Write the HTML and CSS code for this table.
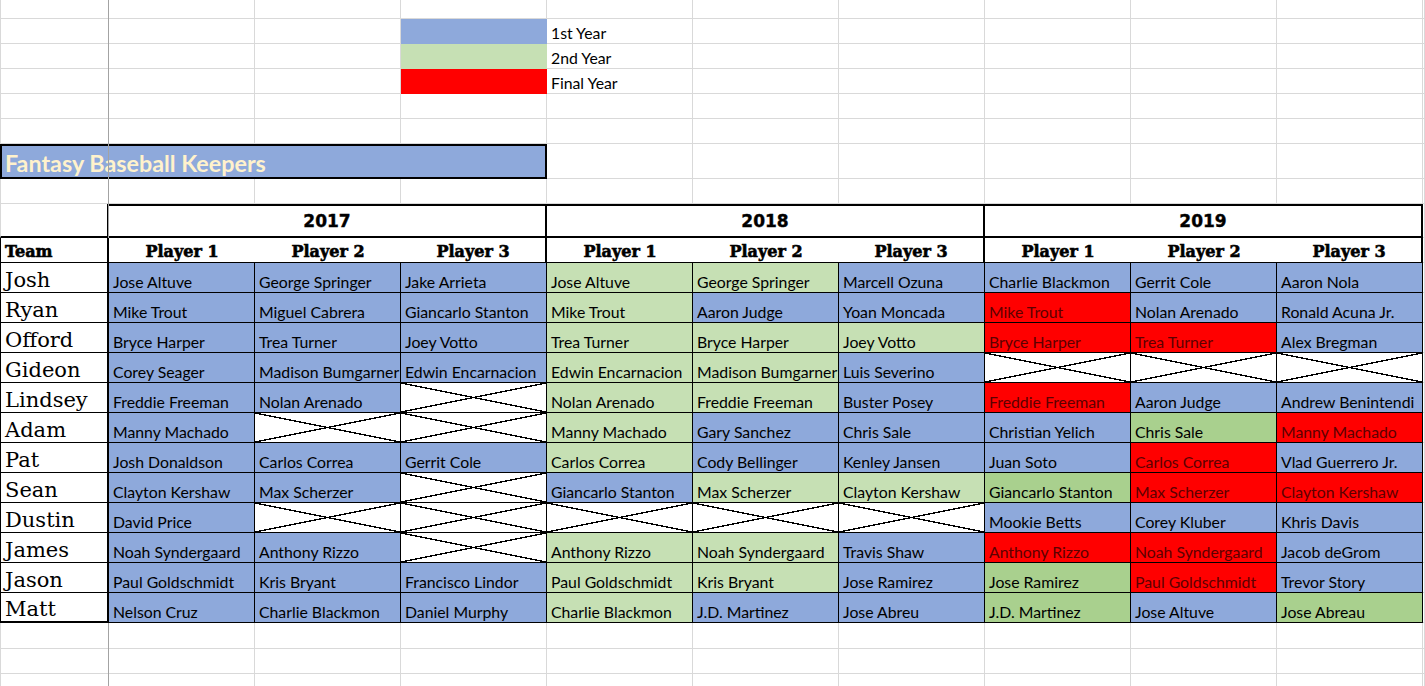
FILE: index.html
```html
<!DOCTYPE html>
<html lang="en">
<head>
<meta charset="utf-8">
<title>Fantasy Baseball Keepers</title>
<link rel="stylesheet" href="styles.css">
</head>
<body>
<div class="sheet">
  <!-- row 1 -->
  <div class="e a"></div><div class="e"></div><div class="e"></div><div class="e"></div><div class="e"></div><div class="e"></div><div class="e"></div><div class="e"></div><div class="e"></div><div class="e"></div><div class="e"></div>
  <!-- legend rows -->
  <div class="e a"></div><div class="e"></div><div class="e"></div><div class="sw b"></div><div class="e lt">1st Year</div><div class="e"></div><div class="e"></div><div class="e"></div><div class="e"></div><div class="e"></div><div class="e"></div>
  <div class="e a"></div><div class="e"></div><div class="e"></div><div class="sw g"></div><div class="e lt">2nd Year</div><div class="e"></div><div class="e"></div><div class="e"></div><div class="e"></div><div class="e"></div><div class="e"></div>
  <div class="e a"></div><div class="e"></div><div class="e"></div><div class="sw r"></div><div class="e lt">Final Year</div><div class="e"></div><div class="e"></div><div class="e"></div><div class="e"></div><div class="e"></div><div class="e"></div>
  <!-- empty rows -->
  <div class="e a"></div><div class="e"></div><div class="e"></div><div class="e"></div><div class="e"></div><div class="e"></div><div class="e"></div><div class="e"></div><div class="e"></div><div class="e"></div><div class="e"></div>
  <div class="e a"></div><div class="e"></div><div class="e"></div><div class="e"></div><div class="e"></div><div class="e"></div><div class="e"></div><div class="e"></div><div class="e"></div><div class="e"></div><div class="e"></div>
  <!-- title -->
  <div class="title">Fantasy Baseball Keepers</div><div class="e"></div><div class="e"></div><div class="e"></div><div class="e"></div><div class="e"></div><div class="e"></div><div class="e"></div>
  <div class="e a"></div><div class="e"></div><div class="e"></div><div class="e"></div><div class="e"></div><div class="e"></div><div class="e"></div><div class="e"></div><div class="e"></div><div class="e"></div><div class="e"></div>
  <!-- years -->
  <div class="e a yc"></div><div class="year">2017</div><div class="year">2018</div><div class="year">2019</div><div class="e"></div>
  <!-- player headers -->
  <div class="team">Team</div>
  <div class="ph">Player 1</div><div class="ph">Player 2</div><div class="ph end">Player 3</div>
  <div class="ph">Player 1</div><div class="ph">Player 2</div><div class="ph end">Player 3</div>
  <div class="ph">Player 1</div><div class="ph">Player 2</div><div class="ph end">Player 3</div>
  <div class="e"></div>

  <div class="nm">Josh</div>
  <div class="c b">Jose Altuve</div><div class="c b">George Springer</div><div class="c b">Jake Arrieta</div>
  <div class="c g">Jose Altuve</div><div class="c g">George Springer</div><div class="c b">Marcell Ozuna</div>
  <div class="c b">Charlie Blackmon</div><div class="c b">Gerrit Cole</div><div class="c b">Aaron Nola</div>
  <div class="e"></div>

  <div class="nm">Ryan</div>
  <div class="c b">Mike Trout</div><div class="c b">Miguel Cabrera</div><div class="c b">Giancarlo Stanton</div>
  <div class="c g">Mike Trout</div><div class="c b">Aaron Judge</div><div class="c b">Yoan Moncada</div>
  <div class="c r">Mike Trout</div><div class="c b">Nolan Arenado</div><div class="c b">Ronald Acuna Jr.</div>
  <div class="e"></div>

  <div class="nm">Offord</div>
  <div class="c b">Bryce Harper</div><div class="c b">Trea Turner</div><div class="c b">Joey Votto</div>
  <div class="c g">Trea Turner</div><div class="c g">Bryce Harper</div><div class="c g">Joey Votto</div>
  <div class="c r">Bryce Harper</div><div class="c r">Trea Turner</div><div class="c b">Alex Bregman</div>
  <div class="e"></div>

  <div class="nm">Gideon</div>
  <div class="c b">Corey Seager</div><div class="c b">Madison Bumgarner</div><div class="c b">Edwin Encarnacion</div>
  <div class="c g">Edwin Encarnacion</div><div class="c g">Madison Bumgarner</div><div class="c b">Luis Severino</div>
  <div class="c x"></div><div class="c x"></div><div class="c x"></div>
  <div class="e"></div>

  <div class="nm">Lindsey</div>
  <div class="c b">Freddie Freeman</div><div class="c b">Nolan Arenado</div><div class="c x"></div>
  <div class="c g">Nolan Arenado</div><div class="c g">Freddie Freeman</div><div class="c b">Buster Posey</div>
  <div class="c r">Freddie Freeman</div><div class="c b">Aaron Judge</div><div class="c b">Andrew Benintendi</div>
  <div class="e"></div>

  <div class="nm">Adam</div>
  <div class="c b">Manny Machado</div><div class="c x"></div><div class="c x"></div>
  <div class="c g">Manny Machado</div><div class="c b">Gary Sanchez</div><div class="c b">Chris Sale</div>
  <div class="c b">Christian Yelich</div><div class="c dg">Chris Sale</div><div class="c r">Manny Machado</div>
  <div class="e"></div>

  <div class="nm">Pat</div>
  <div class="c b">Josh Donaldson</div><div class="c b">Carlos Correa</div><div class="c b">Gerrit Cole</div>
  <div class="c g">Carlos Correa</div><div class="c b">Cody Bellinger</div><div class="c b">Kenley Jansen</div>
  <div class="c b">Juan Soto</div><div class="c r">Carlos Correa</div><div class="c b">Vlad Guerrero Jr.</div>
  <div class="e"></div>

  <div class="nm">Sean</div>
  <div class="c b">Clayton Kershaw</div><div class="c b">Max Scherzer</div><div class="c x"></div>
  <div class="c b">Giancarlo Stanton</div><div class="c g">Max Scherzer</div><div class="c g">Clayton Kershaw</div>
  <div class="c dg">Giancarlo Stanton</div><div class="c r">Max Scherzer</div><div class="c r">Clayton Kershaw</div>
  <div class="e"></div>

  <div class="nm">Dustin</div>
  <div class="c b">David Price</div><div class="c x"></div><div class="c x"></div>
  <div class="c x"></div><div class="c x"></div><div class="c x"></div>
  <div class="c b">Mookie Betts</div><div class="c b">Corey Kluber</div><div class="c b">Khris Davis</div>
  <div class="e"></div>

  <div class="nm">James</div>
  <div class="c b">Noah Syndergaard</div><div class="c b">Anthony Rizzo</div><div class="c x"></div>
  <div class="c g">Anthony Rizzo</div><div class="c g">Noah Syndergaard</div><div class="c b">Travis Shaw</div>
  <div class="c r">Anthony Rizzo</div><div class="c r">Noah Syndergaard</div><div class="c b">Jacob deGrom</div>
  <div class="e"></div>

  <div class="nm">Jason</div>
  <div class="c b">Paul Goldschmidt</div><div class="c b">Kris Bryant</div><div class="c b">Francisco Lindor</div>
  <div class="c g">Paul Goldschmidt</div><div class="c g">Kris Bryant</div><div class="c b">Jose Ramirez</div>
  <div class="c dg">Jose Ramirez</div><div class="c r">Paul Goldschmidt</div><div class="c b">Trevor Story</div>
  <div class="e"></div>

  <div class="nm last">Matt</div>
  <div class="c b">Nelson Cruz</div><div class="c b">Charlie Blackmon</div><div class="c b">Daniel Murphy</div>
  <div class="c g">Charlie Blackmon</div><div class="c b">J.D. Martinez</div><div class="c b">Jose Abreu</div>
  <div class="c dg">J.D. Martinez</div><div class="c b">Jose Altuve</div><div class="c dg">Jose Abreau</div>
  <div class="e"></div>

  <!-- trailing rows -->
  <div class="e a"></div><div class="e"></div><div class="e"></div><div class="e"></div><div class="e"></div><div class="e"></div><div class="e"></div><div class="e"></div><div class="e"></div><div class="e"></div><div class="e"></div>
  <div class="e a"></div><div class="e"></div><div class="e"></div><div class="e"></div><div class="e"></div><div class="e"></div><div class="e"></div><div class="e"></div><div class="e"></div><div class="e"></div><div class="e"></div>
  <div class="e a"></div><div class="e"></div><div class="e"></div><div class="e"></div><div class="e"></div><div class="e"></div><div class="e"></div><div class="e"></div><div class="e"></div><div class="e"></div><div class="e"></div>
</div>
</body>
</html>
```

FILE: styles.css
```css
* {
  box-sizing: border-box;
  margin: 0;
  padding: 0;
}

html, body {
  background: #ffffff;
}

body {
  width: 1425px;
  height: 686px;
  overflow: hidden;
  font-family: Lato, "Liberation Sans", sans-serif;
  color: #000;
}

.sheet {
  position: relative;
  display: grid;
  grid-template-columns: 109px repeat(9, 146px) 1fr;
  grid-template-rows: 19px 25px 25px 25px 25px 25px 35px 25px 34px 25px repeat(12, 30px) 26px 25px 25px;
  width: 1425px;
}

/* frozen pane divider */
.sheet::after {
  content: "";
  position: absolute;
  left: 108px;
  top: 0;
  width: 1px;
  height: 100%;
  background: #a3a3a3;
  z-index: 1;
}

.e {
  border-right: 1px solid #d9d9d9;
  border-bottom: 1px solid #d9d9d9;
}

.a {
  border-left: 1px solid #d9d9d9;
}

.b { background: #8ea9db; }
.g { background: #c6e0b4; }
.dg { background: #a9d08e; }
.r { background: #ff0000; color: #5c0000; }

.sw {
  border-bottom: 1px solid transparent;
}

.lt {
  display: flex;
  align-items: flex-end;
  padding: 0 0 1px 4px;
  font-size: 15.8px;
  line-height: 18px;
  white-space: nowrap;
}

.title {
  grid-column: span 4;
  display: flex;
  align-items: center;
  padding: 2px 0 0 3px;
  background: #8ea9db;
  border: 2px solid #000;
  color: #fff2cc;
  font-weight: 700;
  font-size: 23.3px;
  white-space: nowrap;
}

.yc {
  border-right: 2px solid #000;
  border-bottom: 2px solid #000;
}

.year {
  grid-column: span 3;
  display: flex;
  align-items: center;
  justify-content: center;
  border-top: 2px solid #000;
  border-right: 2px solid #000;
  border-bottom: 2px solid #000;
  font-family: "DejaVu Sans", sans-serif;
  font-weight: 700;
  font-size: 17px;
  -webkit-text-stroke: 0.4px #000;
  z-index: 2;
}

.team, .ph {
  display: flex;
  align-items: flex-end;
  padding-bottom: 1px;
  border-bottom: 1px solid #000;
  font-family: "DejaVu Serif", serif;
  font-weight: 700;
  font-size: 16px;
  -webkit-text-stroke: 0.6px #000;
  background: #fff;
  z-index: 2;
}

.team {
  padding-left: 4px;
  border-left: 1px solid #000;
  border-right: 2px solid #000;
}

.ph {
  justify-content: center;
}

.ph.end {
  border-right: 2px solid #000;
}

.nm {
  display: flex;
  align-items: flex-end;
  padding-left: 4px;
  border-left: 1px solid #000;
  border-right: 2px solid #000;
  border-bottom: 1px solid #000;
  background: #fff;
  font-family: "DejaVu Serif", serif;
  font-size: 21px;
  line-height: 24px;
  z-index: 2;
}

.nm.last {
  border-bottom: 2px solid #000;
}

.c {
  display: flex;
  align-items: flex-end;
  padding: 0 0 1px 4px;
  border-right: 1px solid #000;
  border-bottom: 1px solid #000;
  font-size: 15.8px;
  line-height: 18px;
  white-space: nowrap;
  overflow: hidden;
  z-index: 2;
}

.x {
  background-color: #fff;
  background-image:
    linear-gradient(to top right, transparent calc(50% - 0.7px), #000 calc(50% - 0.7px), #000 calc(50% + 0.7px), transparent calc(50% + 0.7px)),
    linear-gradient(to bottom right, transparent calc(50% - 0.7px), #000 calc(50% - 0.7px), #000 calc(50% + 0.7px), transparent calc(50% + 0.7px));
}
```
